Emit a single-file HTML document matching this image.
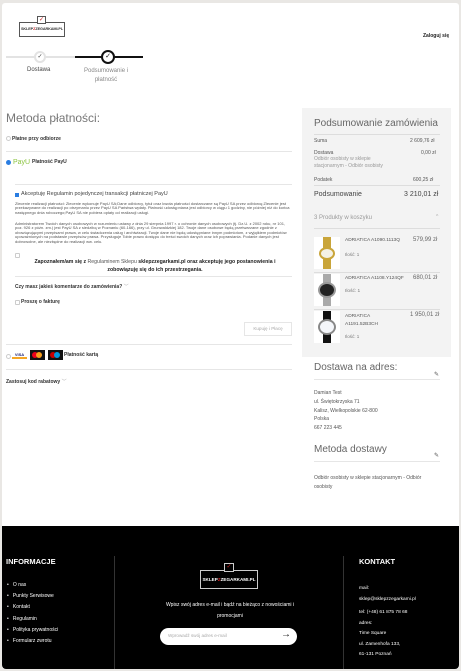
<!DOCTYPE html>
<html><head><meta charset="utf-8"><style>
*{margin:0;padding:0;box-sizing:border-box}
body{width:461px;height:671px;background:#e9e7e4;font-family:"Liberation Sans",sans-serif;position:relative;overflow:hidden;color:#222}
.a{position:absolute;white-space:nowrap}
#page{position:absolute;left:2px;top:3px;width:457px;height:666px;background:#fff;border-radius:3px}
.hl{position:absolute;height:1px;background:#e6e6e6}
.b{font-weight:bold}
.s{font-size:5px}
.t{font-size:4px;color:#555;line-height:4.4px;white-space:normal}
.foot{position:absolute;left:2px;top:526px;width:457px;height:143px;background:#000;border-radius:0 0 4px 4px}
.w{color:#fff}
.rad{position:absolute;width:5px;height:5px;border:1px solid #ccc;border-radius:50%}
.chk{position:absolute;width:5px;height:5px;border:1px solid #ccc;border-radius:1px}
.watch{position:absolute;left:314px;width:26px;height:32px;background:#fff}
</style></head><body>
<div id="page"></div>
<div class="a" style="left:19px;top:22px;width:46px;height:15px;border:1px solid #555;font-size:3.8px;font-weight:bold;text-align:center;line-height:13px;color:#333;letter-spacing:-0.1px;overflow:hidden">SKLEP<span style="color:#c22">Z</span>ZEGARKAMI.PL</div>
<div class="a" style="left:37px;top:16px;width:9px;height:8px;border:1px solid #555;background:#fff;color:#c22;font-size:6px;line-height:6px;text-align:center">✓</div>
<div class="a b" style="left:423px;top:33px;font-size:5px">Zaloguj się</div>
<div class="a" style="left:6px;top:56px;width:69px;height:2px;background:#e3e3e3"></div>
<div class="a" style="left:75px;top:56px;width:68px;height:2px;background:#111"></div>
<div class="a" style="left:34px;top:51px;width:12px;height:12px;border-radius:50%;background:#fff;border:2px solid #e3e3e3;font-size:6px;text-align:center;line-height:8px;color:#444">✓</div>
<div class="a" style="left:101px;top:50px;width:14px;height:14px;border-radius:50%;background:#fff;border:2px solid #111;font-size:7px;text-align:center;line-height:10px;color:#111">✓</div>
<div class="a" style="left:27px;top:67px;font-size:6px;color:#444">Dostawa</div>
<div class="a" style="left:84px;top:67px;font-size:6px;color:#888;text-align:center;line-height:9px">Podsumowanie i<br>płatność</div>
<div class="a" style="left:6px;top:111px;font-size:12px;color:#777">Metoda płatności:</div>
<div class="rad" style="left:6px;top:136px"></div>
<div class="a b s" style="left:12px;top:136px;color:#333">Płatne przy odbiorze</div>
<div class="hl" style="left:6px;top:151px;width:286px"></div>
<div class="a" style="left:6px;top:160px;width:5px;height:5px;border-radius:50%;background:#2a7de1"></div>
<div class="a" style="left:13px;top:159px;font-size:7px;color:#8bc43f">PayU</div>
<div class="a b s" style="left:32px;top:159px;color:#333">Płatność PayU</div>
<div class="hl" style="left:15px;top:184px;width:277px"></div>
<div class="a" style="left:15px;top:193px;width:4px;height:4px;background:#2a7de1"></div>
<div class="a" style="left:21px;top:191px;font-size:5.5px;color:#444">Akceptuję Regulamin pojedynczej transakcji płatniczej PayU</div>
<div class="a t" style="left:15px;top:202px;width:277px">Zlecenie realizacji płatności: Zlecenie wykonuje PayU SA;Dane odbiorcy, tytuł oraz kwota płatności dostarczane są PayU SA przez odbiorcę;Zlecenie jest przekazywane do realizacji po otrzymaniu przez PayU SA Państwa wpłaty. Płatność udostępniana jest odbiorcy w ciągu 1 godziny, nie później niż do końca następnego dnia roboczego;PayU SA nie pobiera opłaty od realizacji usługi.</div>
<div class="a t" style="left:15px;top:222px;width:277px">Administratorem Twoich danych osobowych w rozumieniu ustawy z dnia 29 sierpnia 1997 r. o ochronie danych osobowych (tj. Dz.U. z 2002 roku, nr 101, poz. 926 z późn. zm.) jest PayU SA z siedzibą w Poznaniu (60-166), przy ul. Grunwaldzkiej 182. Twoje dane osobowe będą przetwarzane zgodnie z obowiązującymi przepisami prawa, w celu świadczenia usług i archiwizacji. Twoje dane nie będą udostępniane innym podmiotom, z wyjątkiem podmiotów upoważnionych na podstawie przepisów prawa. Przysługuje Tobie prawo dostępu do treści swoich danych oraz ich poprawiania. Podanie danych jest dobrowolne, ale niezbędne do realizacji ww. celu.</div>
<div class="chk" style="left:15px;top:253px"></div>
<div class="a b" style="left:24px;top:258px;width:262px;font-size:5.2px;text-align:center;line-height:8px;white-space:normal;color:#222">Zapoznałem/am się z <span style="font-weight:normal;color:#555">Regulaminem Sklepu</span> sklepzzegarkami.pl oraz akceptuję jego postanowienia i zobowiązuję się do ich przestrzegania.</div>
<div class="hl" style="left:15px;top:276px;width:277px"></div>
<div class="a b s" style="left:15px;top:283px;color:#333">Czy masz jakieś komentarze do zamówienia? <span style="font-weight:normal;color:#999">﹀</span></div>
<div class="chk" style="left:15px;top:300px"></div>
<div class="a b s" style="left:21px;top:299px;color:#333">Proszę o fakturę</div>
<div class="a" style="left:244px;top:322px;width:48px;height:14px;border:1px solid #e6e6e6;font-size:4.6px;color:#aaa;text-align:center;line-height:12px">Kupuję i Płacę</div>
<div class="hl" style="left:6px;top:344px;width:286px"></div>
<div class="rad" style="left:6px;top:354px"></div>
<div class="a" style="left:12px;top:352px;width:15px;height:7px;background:#fff;border-bottom:2px solid #f5a623;color:#1a1f71;font-size:4px;font-weight:bold;text-align:center;line-height:6px">VISA</div>
<div class="a" style="left:30px;top:350px;width:15px;height:10px;background:#111"><div class="a" style="left:2px;top:2px;width:6px;height:6px;border-radius:50%;background:#eb001b"></div><div class="a" style="left:6px;top:2px;width:6px;height:6px;border-radius:50%;background:#f79e1b"></div></div>
<div class="a" style="left:48px;top:350px;width:15px;height:10px;background:#111"><div class="a" style="left:2px;top:2px;width:6px;height:6px;border-radius:50%;background:#cc0000"></div><div class="a" style="left:6px;top:2px;width:6px;height:6px;border-radius:50%;background:#0099df"></div></div>
<div class="a b s" style="left:64px;top:352px;color:#333">Płatność kartą</div>
<div class="hl" style="left:6px;top:369px;width:286px"></div>
<div class="a b s" style="left:6px;top:378px;color:#333">Zastosuj kod rabatowy <span style="font-weight:normal;color:#999">﹀</span></div>
<div class="a" style="left:302px;top:108px;width:149px;height:249px;background:#f3f3f3"></div>
<div class="a" style="left:314px;top:118px;font-size:10px;color:#666">Podsumowanie zamówienia</div>
<div class="hl" style="left:314px;top:134px;width:126px;background:#ddd"></div>
<div class="a s" style="left:314px;top:138px;color:#555">Suma</div><div class="a s" style="left:410px;top:138px;color:#555">2 609,76 zł</div>
<div class="a s" style="left:314px;top:150px;color:#555">Dostawa</div><div class="a s" style="left:421px;top:150px;color:#555">0,00 zł</div>
<div class="a s" style="left:314px;top:156px;color:#999;line-height:7px">Odbiór osobisty w sklepie<br>stacjonarnym - Odbiór osobisty</div>
<div class="a s" style="left:314px;top:177px;color:#555">Podatek</div><div class="a s" style="left:413px;top:177px;color:#555">600,25 zł</div>
<div class="hl" style="left:314px;top:185px;width:126px;background:#ddd"></div>
<div class="a" style="left:314px;top:191px;font-size:7px;color:#444">Podsumowanie</div><div class="a" style="left:404px;top:191px;font-size:7px;color:#444">3 210,01 zł</div>
<div class="a" style="left:314px;top:215px;font-size:6px;color:#999">3 Produkty w koszyku</div><div class="a" style="left:436px;top:214px;font-size:5px;color:#aaa">^</div>
<div class="hl" style="left:314px;top:228px;width:126px;background:#ddd"></div>
<div class="watch" style="top:237px"><div class="a" style="left:9px;top:0;width:8px;height:32px;background:#c9a53a"></div><div class="a" style="left:5px;top:10px;width:16px;height:13px;border-radius:50%;background:#f4f1e6;border:2px solid #c9a53a"></div></div>
<div class="watch" style="top:274px"><div class="a" style="left:9px;top:0;width:8px;height:32px;background:#aaa"></div><div class="a" style="left:4px;top:8px;width:18px;height:16px;border-radius:50%;background:#222;border:2px solid #999"></div></div>
<div class="watch" style="top:311px"><div class="a" style="left:9px;top:0;width:8px;height:32px;background:#111"></div><div class="a" style="left:4px;top:8px;width:18px;height:16px;border-radius:50%;background:#f4f6fa;border:2px solid #888"></div></div>
<div class="a" style="left:345px;top:238px;font-size:4.8px;color:#555">ADRIATICA A1090.1113Q</div><div class="a" style="left:413px;top:237px;font-size:6px;color:#666">579,99 zł</div>
<div class="a" style="left:345px;top:252px;font-size:4.5px;color:#777">Ilość: 1</div>
<div class="hl" style="left:314px;top:272px;width:126px;background:#ddd"></div>
<div class="a" style="left:345px;top:276px;font-size:4.8px;color:#555">ADRIATICA A1108.Y124QF</div><div class="a" style="left:413px;top:275px;font-size:6px;color:#666">680,01 zł</div>
<div class="a" style="left:345px;top:289px;font-size:4.8px;color:#777">Ilość: 1</div>
<div class="hl" style="left:314px;top:309px;width:126px;background:#ddd"></div>
<div class="a" style="left:345px;top:313px;font-size:4.8px;color:#555;line-height:7.5px">ADRIATICA<br>A1191.52B3CH</div><div class="a" style="left:410px;top:312px;font-size:6px;color:#666">1 950,01 zł</div>
<div class="a" style="left:345px;top:334px;font-size:4.5px;color:#777">Ilość: 1</div>
<div class="a" style="left:314px;top:362px;font-size:10px;color:#666">Dostawa na adres:</div>
<div class="a" style="left:434px;top:371px;font-size:6px;color:#555">✎</div>
<div class="hl" style="left:314px;top:379px;width:126px"></div>
<div class="a s" style="left:314px;top:389px;color:#555;line-height:8.8px">Damian Test<br>ul. Świętokrzyska 71<br>Kalisz, Wielkopolskie 62-800<br>Polska<br>667 223 445</div>
<div class="a" style="left:314px;top:444px;font-size:10px;color:#666">Metoda dostawy</div>
<div class="a" style="left:434px;top:452px;font-size:6px;color:#555">✎</div>
<div class="hl" style="left:314px;top:461px;width:126px"></div>
<div class="a s" style="left:314px;top:474px;color:#555;line-height:8.5px">Odbiór osobisty w sklepie stacjonarnym - Odbiór<br>osobisty</div>
<div class="foot"></div>
<div class="a" style="left:114px;top:556px;width:1px;height:113px;background:#333"></div>
<div class="a" style="left:343px;top:556px;width:1px;height:113px;background:#333"></div>
<div class="a w b" style="left:6px;top:557px;font-size:7.5px">INFORMACJE</div>
<div class="a w" style="left:7px;top:580px;font-size:5px;line-height:11.2px">•&nbsp;&nbsp;&nbsp;O nas<br>•&nbsp;&nbsp;&nbsp;Punkty Serwisowe<br>•&nbsp;&nbsp;&nbsp;Kontakt<br>•&nbsp;&nbsp;&nbsp;Regulamin<br>•&nbsp;&nbsp;&nbsp;Polityka prywatności<br>•&nbsp;&nbsp;&nbsp;Formularz zwrotu</div>
<div class="a w" style="left:200px;top:570px;width:58px;height:19px;border:1px solid #ccc;font-size:4.6px;text-align:center;line-height:17px;font-weight:bold;overflow:hidden">SKLEP<span style="color:#c22">Z</span>ZEGARKAMI.PL</div>
<div class="a" style="left:224px;top:563px;width:10px;height:9px;border:1px solid #ccc;background:#000;color:#c22;font-size:6px;line-height:7px;text-align:center">✓</div>
<div class="a w" style="left:154px;top:600px;width:152px;font-size:5px;text-align:center;line-height:11px;white-space:normal">Wpisz swój adres e-mail i bądź na bieżąco z nowościami i promocjami</div>
<div class="a" style="left:160px;top:628px;width:137px;height:17px;background:#fff;border-radius:9px"></div>
<div class="a" style="left:168px;top:633px;font-size:4.6px;color:#aaa">Wprowadź swój adres e-mail</div>
<div class="a" style="left:281px;top:629px;font-size:10px;color:#111">→</div>
<div class="a w b" style="left:359px;top:557px;font-size:7.5px">KONTAKT</div>
<div class="a w" style="left:359px;top:584px;font-size:4.8px;line-height:10.7px">mail:<br>sklep@sklepzzegarkami.pl</div>
<div class="a w" style="left:359px;top:608px;font-size:4.8px;line-height:10.5px">tel: (+48) 61 875 78 68<br>adres:<br>Time Square<br>ul. Zamenhofa 133,<br>61-131 Poznań</div>
</body></html>
